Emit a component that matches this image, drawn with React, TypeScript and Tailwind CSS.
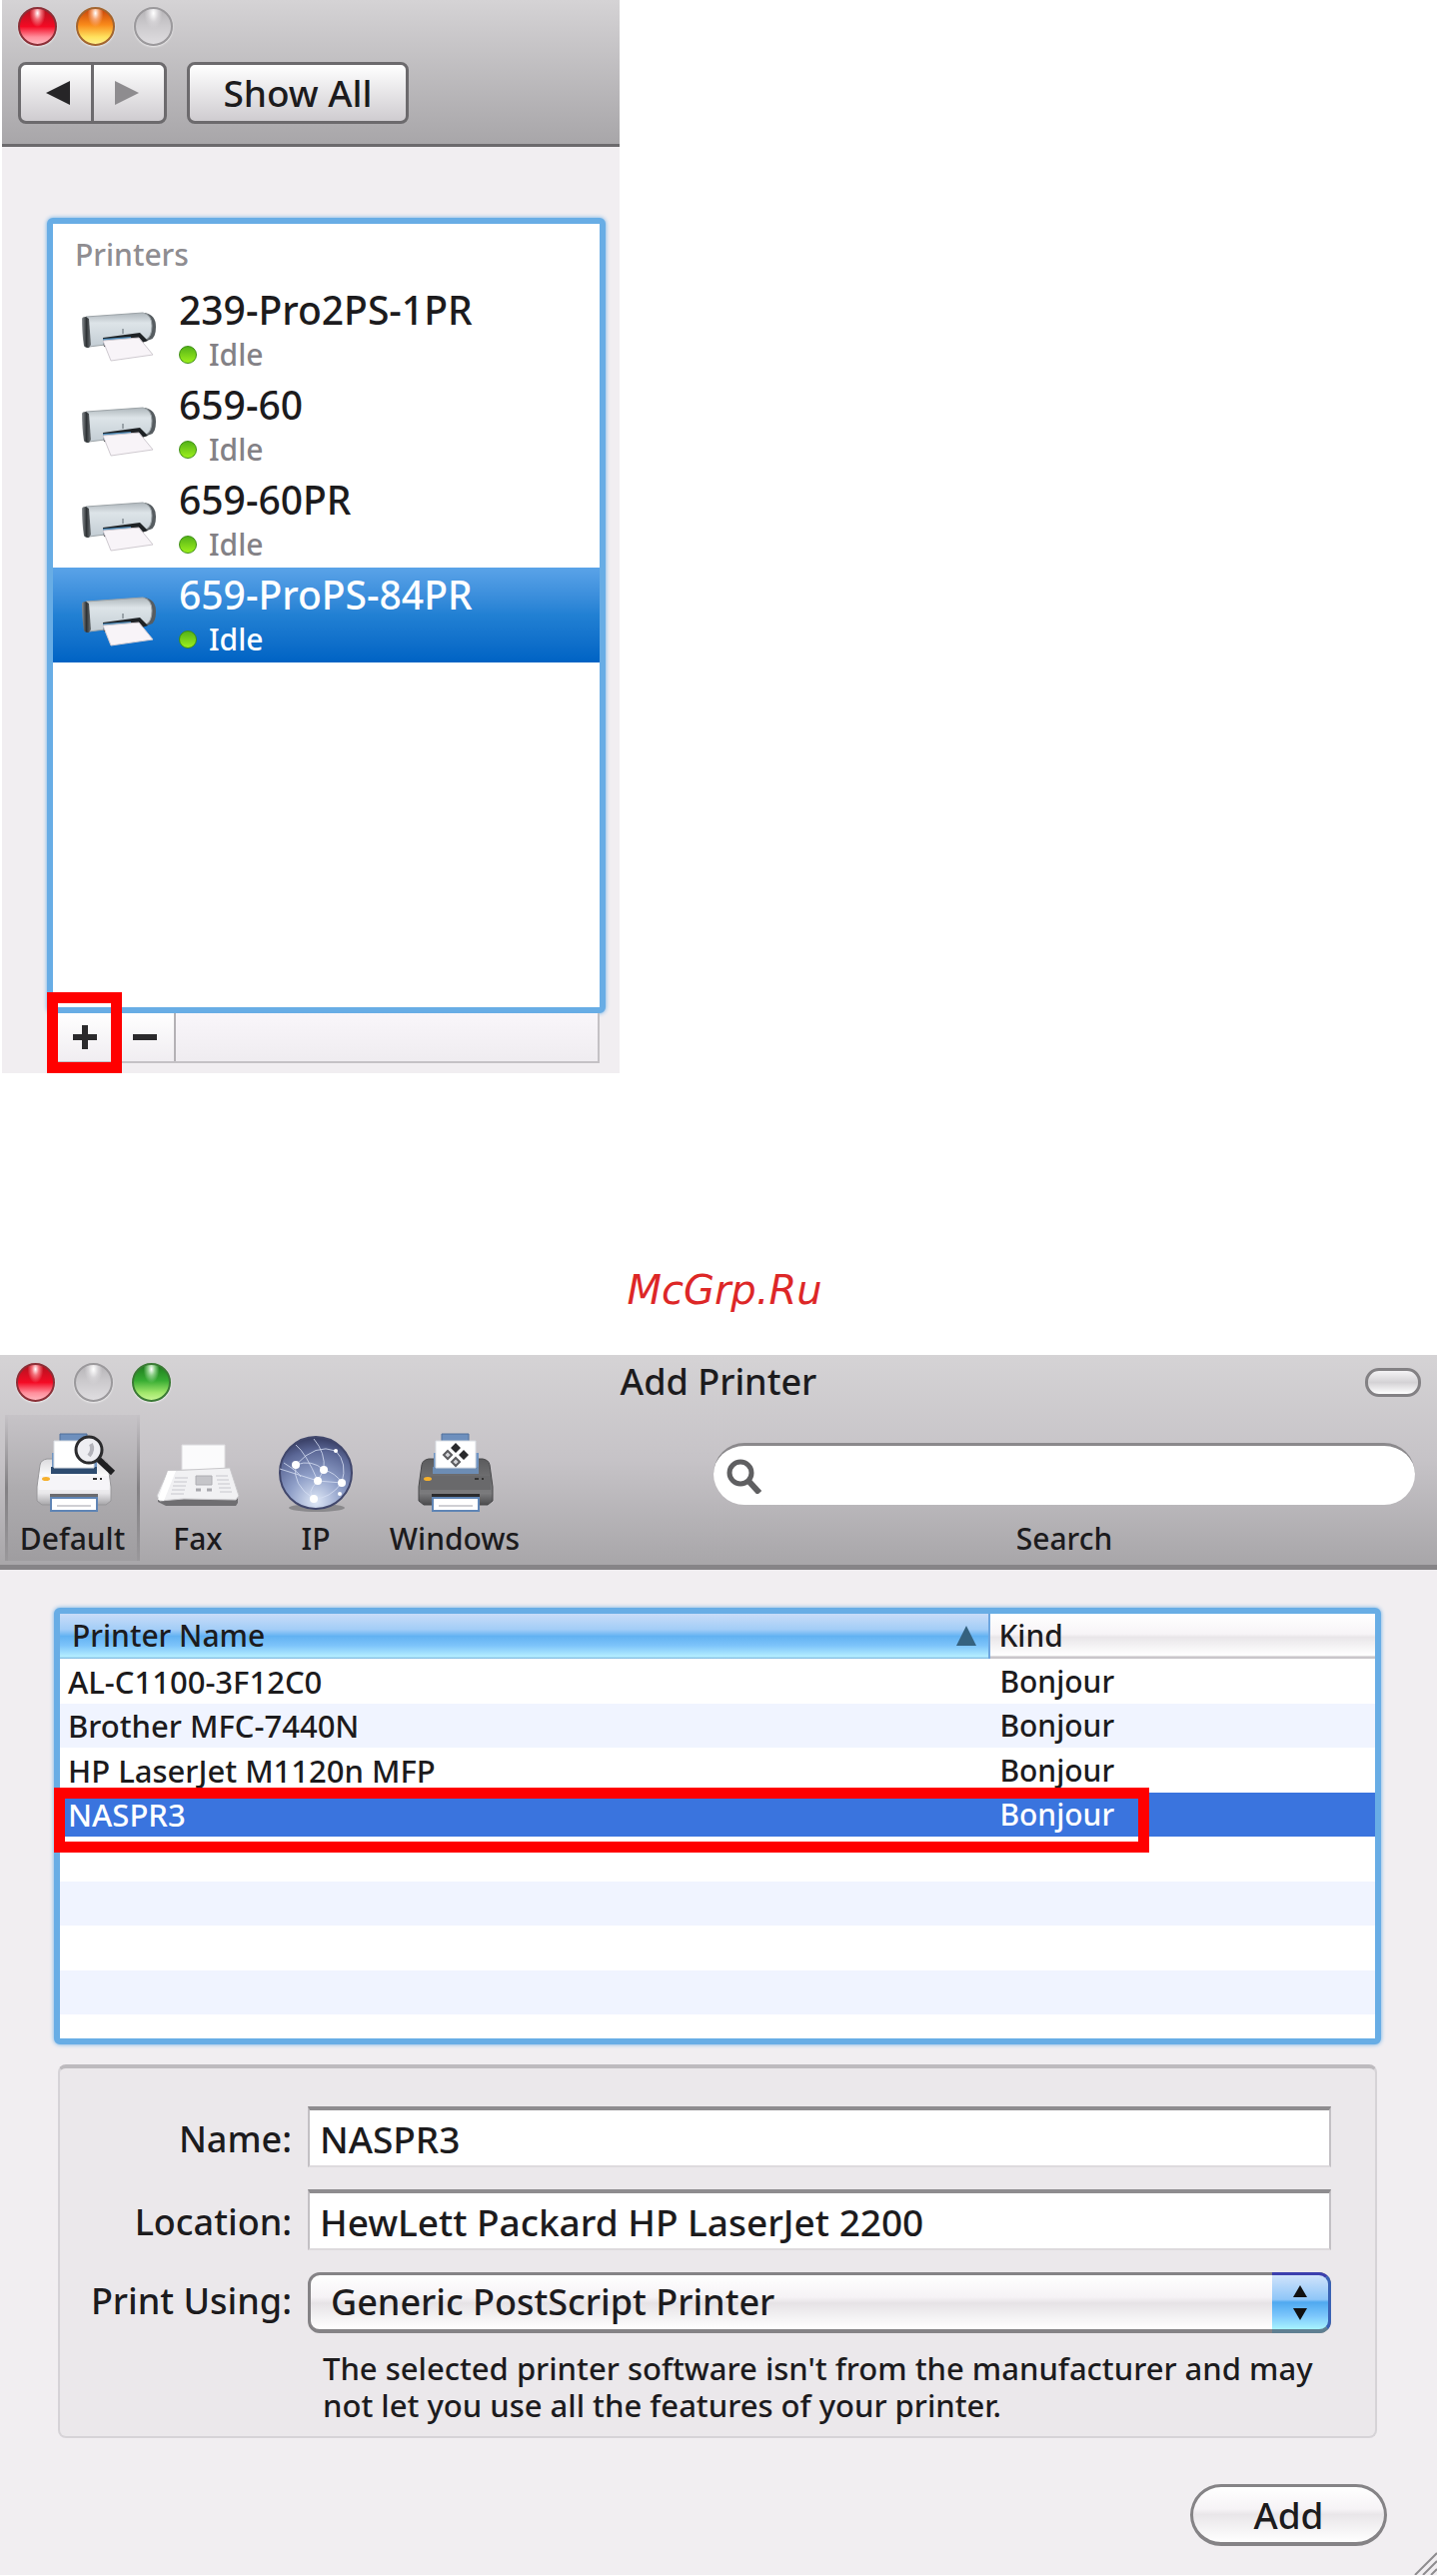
import React from "react";

const queue = [
  { name: "239-Pro2PS-1PR", selected: false },
  { name: "659-60", selected: false },
  { name: "659-60PR", selected: false },
  { name: "659-ProPS-84PR", selected: true },
];

const found = [
  { name: "AL-C1100-3F12C0", kind: "Bonjour" },
  { name: "Brother MFC-7440N", kind: "Bonjour" },
  { name: "HP LaserJet M1120n MFP", kind: "Bonjour" },
  { name: "NASPR3", kind: "Bonjour" },
  { name: "", kind: "" },
  { name: "", kind: "" },
  { name: "", kind: "" },
  { name: "", kind: "" },
];

const lightStyles = {
  red: "border-[#8c2f37] bg-[radial-gradient(ellipse_at_50%_12%,#ffffff_0%,#f4727c_14%,transparent_32%),linear-gradient(#b3121f_0%,#f40a24_50%,#ff8f9c_80%,#ffb5bd_100%)]",
  amber:
    "border-[#a3652f] bg-[radial-gradient(ellipse_at_50%_12%,#ffffff_0%,#f7a878_14%,transparent_32%),linear-gradient(#c8430a_0%,#f98a1a_45%,#ffe25e_80%,#fff08a_100%)]",
  green:
    "border-[#3b7a35] bg-[radial-gradient(ellipse_at_50%_12%,#ffffff_0%,#8fd08a_14%,transparent_32%),linear-gradient(#1c7a1c_0%,#38ad33_45%,#a2e86c_80%,#c6f592_100%)]",
  gray: "border-[#9b999c] bg-[radial-gradient(ellipse_at_50%_12%,#ffffff_0%,#d5d3d6_20%,transparent_36%),linear-gradient(#b6b4b7_0%,#cbc9cc_45%,#dfdde0_100%)]",
};

function Light({ tone, label }: { tone: keyof typeof lightStyles; label: string }) {
  return (
    <button
      type="button"
      aria-label={label}
      className={`size-[39px] rounded-full border-2 shadow-[0_1px_2px_rgba(255,255,255,0.7)] ${lightStyles[tone]}`}
    />
  );
}

function InkjetIcon() {
  return (
    <svg viewBox="0 0 76 50" className="mt-3 h-[50px] w-[76px] shrink-0" aria-hidden="true">
      <defs>
        <linearGradient id="inkjet-body" x1="0" y1="0" x2="0" y2="1">
          <stop offset="0" stopColor="#aeb6bb" />
          <stop offset="0.3" stopColor="#dde4e8" />
          <stop offset="1" stopColor="#c3cdd4" />
        </linearGradient>
        <linearGradient id="inkjet-side" x1="0" y1="0" x2="1" y2="0">
          <stop offset="0" stopColor="#8d9296" />
          <stop offset="0.5" stopColor="#2e3235" />
          <stop offset="1" stopColor="#6b7175" />
        </linearGradient>
      </defs>
      <path d="M64 1q11 2 11 14t-6 13l-6 2z" fill="#565c60" />
      <path d="M5 5L62 1q9 2 9 13t-6 14L8 35z" fill="url(#inkjet-body)" stroke="#9da4a8" strokeWidth="1" />
      <path d="M1 7q0-2 4-2l3 2 2 26-2 3q-4 0-5-2Q1 22 1 7z" fill="url(#inkjet-side)" />
      <path d="M22 26l37-5 8 8-6 2-38 4z" fill="#1e2225" />
      <path d="M22 27l28-2v3l-27 5z" fill="#4d8ab8" />
      <path d="M22 29l36-3 14 17-42 6z" fill="#f8f4f8" stroke="#cfcad0" strokeWidth="1" />
      <path d="M42 17v5" stroke="#9aa3a9" strokeWidth="2" />
    </svg>
  );
}

function PrinterIcon({ dark, children }: { dark?: boolean; children?: React.ReactNode }) {
  const id = dark ? "laser-dark" : "laser-light";
  return (
    <svg viewBox="-2 0 80 80" className="size-20 overflow-visible" aria-hidden="true">
      <defs>
        <linearGradient id={id} x1="0" y1="0" x2="0" y2="1">
          <stop offset="0" stopColor={dark ? "#5b5b5d" : "#dcdbde"} />
          <stop offset="0.4" stopColor={dark ? "#6f6f71" : "#ffffff"} />
          <stop offset="0.75" stopColor={dark ? "#7b7b7d" : "#e8e7ea"} />
          <stop offset="1" stopColor={dark ? "#4c4c4e" : "#a7a6a9"} />
        </linearGradient>
      </defs>
      <path d="M12 26h54q6 1 7 6l3 22v14l-5 4H7l-5-4V54l3-22q1-5 7-6z" fill={`url(#${id})`} stroke={dark ? "#48484a" : "#98979a"} />
      <path d="M25 1h27v10H25z" fill="#6d8fbd" stroke="#50709c" />
      <path d="M17 20h45v21H17z" fill="#7195c2" />
      <path d="M16 34h46v7H16z" fill={dark ? "#6d8db4" : "#2e4c70"} />
      <path d="M19 8h40v27H19z" fill="#ffffff" stroke="#d9dde3" />
      <path d="M4 43h70v14H4z" fill={dark ? "#69696b" : "#f6f5f8"} />
      <path d="M15 61h48v7H15z" fill={dark ? "#2b2b2d" : "#6b6b6e"} />
      <path d="M16 65h46v13H16z" fill="#ffffff" stroke="#5f85b5" strokeWidth="2" />
      <path d="M22 73h34" stroke="#cfcfd4" strokeWidth="2" />
      <ellipse cx="11" cy="46" rx="4" ry="2" fill="#f6b02c" />
      <path d="M58 46h4M65 46h2" stroke="#333" strokeWidth="2" />
      {children}
    </svg>
  );
}

function FaxIcon() {
  return (
    <svg viewBox="0 0 84 80" className="h-20 w-[84px]" aria-hidden="true">
      <path d="M2 64h80v6l-2 3H10l-8-4z" fill="#6f6e71" />
      <path d="M26 12h43v25H26z" fill="#fbfbfc" stroke="#dedde0" />
      <path d="M12 38L74 35l9 28-3 4-52-1-24 2-3-5z" fill="#f1f1f3" stroke="#c9c8cb" />
      <path d="M12 38h8L8 68l-6-1z" fill="#ffffff" />
      <path d="M19 45h13M18 49h13M17 53h13M16 57h13M15 61h13M60 43h12M61 47h12M62 51h12M63 55h12M64 59h12" stroke="#dcdce0" strokeWidth="2" />
      <path d="M40 43h16v9H40z" fill="#c5c5c9" stroke="#aeaeb3" />
      <path d="M40 57h5M51 57h5" stroke="#a8a8ad" strokeWidth="3" />
    </svg>
  );
}

function GlobeIcon() {
  return (
    <svg viewBox="0 0 80 80" className="size-20" aria-hidden="true">
      <defs>
        <radialGradient id="globe" cx="0.5" cy="0.9" r="0.95">
          <stop offset="0" stopColor="#dfe8f7" />
          <stop offset="0.4" stopColor="#8f9fc8" />
          <stop offset="0.75" stopColor="#5b6796" />
          <stop offset="1" stopColor="#2b2f52" />
        </radialGradient>
      </defs>
      <ellipse cx="41" cy="75" rx="28" ry="4" fill="#8a898c" />
      <circle cx="40" cy="40" r="36" fill="url(#globe)" stroke="#41476c" strokeWidth="2" />
      <g fill="none" stroke="#d6def2" strokeWidth="1" opacity="0.8">
        <path d="M20 32Q40 10 60 18M20 32Q36 26 48 37L42 48L66 50M48 37Q60 40 66 50M4 36L42 48Q30 60 38 66M48 37Q50 20 38 6M66 50Q72 30 60 18M20 32Q16 52 38 66M38 66Q54 66 66 50M42 48Q30 20 20 12M8 30Q24 40 25 44" />
      </g>
      <g fill="#ffffff">
        <circle cx="20" cy="32" r="4" />
        <circle cx="48" cy="37" r="4" />
        <circle cx="42" cy="48" r="4" />
        <circle cx="66" cy="50" r="4" />
        <circle cx="38" cy="66" r="4" />
        <circle cx="60" cy="18" r="2" />
        <circle cx="64" cy="61" r="2" />
      </g>
    </svg>
  );
}

function Magnifier({ className }: { className: string }) {
  return (
    <svg viewBox="0 0 36 36" className={className} aria-hidden="true">
      <circle cx="15" cy="15" r="11" fill="none" stroke="#5f5f61" strokeWidth="5" />
      <path d="M23 23l11 12" stroke="#5f5f61" strokeWidth="6" />
    </svg>
  );
}

function ToolbarItem({ label, className, children }: { label: string; className: string; children: React.ReactNode }) {
  return (
    <button type="button" className={`flex flex-col items-center pt-[18px] ${className}`}>
      {children}
      <span className="mt-1 text-[30px] leading-[44px] font-medium">{label}</span>
    </button>
  );
}

function PrintersWindow() {
  return (
    <section className="ml-0.5 w-[43%] bg-[#f1eef1]" aria-label="Printers">
      <header className="border-b-[3px] border-[#6c6a6d] bg-linear-to-b from-[#d5d3d5] to-[#a8a6a9] px-4 pt-[7px] pb-5">
        <div className="flex gap-[19px]">
          <Light tone="red" label="Close" />
          <Light tone="amber" label="Minimize" />
          <Light tone="gray" label="Zoom" />
        </div>
        <div className="mt-4 flex gap-5">
          <div className="flex h-[62px] w-[149px] overflow-hidden rounded-lg border-[3px] border-[#6c6a6d] bg-linear-to-b from-white to-[#cfccd0]">
            <button type="button" aria-label="Back" className="flex flex-1 items-center justify-center border-r-[3px] border-[#6c6a6d] pl-1">
              <svg viewBox="0 0 24 24" className="size-6" aria-hidden="true"><path d="M24 0v24L0 12z" fill="#262527" /></svg>
            </button>
            <button type="button" aria-label="Forward" className="flex flex-1 items-center justify-center pr-1">
              <svg viewBox="0 0 24 24" className="size-6" aria-hidden="true"><path d="M0 0v24L24 12z" fill="#8e8c8f" /></svg>
            </button>
          </div>
          <button type="button" className="h-[62px] w-[222px] rounded-lg border-[3px] border-[#6c6a6d] bg-linear-to-b from-white to-[#cfccd0] text-[37px] leading-[56px] font-medium">
            Show All
          </button>
        </div>
      </header>

      <div className="pt-[71px] pr-[14px] pb-[10px] pl-[45px]">
        <div className="relative">
          <div className="min-h-[796px] rounded-md border-[6px] border-[#68ade5] bg-white shadow-[0_0_4px_#68ade5]">
            <h2 className="pt-[3px] pl-[22px] text-[30px] leading-[56px] font-medium text-[#8f8d91]">Printers</h2>
            <ul>
              {queue.map((p) => (
                <li
                  key={p.name}
                  className={`flex h-[95px] items-center gap-[22px] pl-7 ${
                    p.selected ? "bg-linear-to-b from-[#5aa3e8] via-[#2180d3] to-[#0063c4] text-white" : "text-[#1c1b1d]"
                  }`}
                >
                  <InkjetIcon />
                  <div className="pt-[3px]">
                    <div className="text-[39px] leading-[46px] font-medium">{p.name}</div>
                    <div className={`flex items-center gap-3 text-[30px] leading-[44px] font-medium ${p.selected ? "text-white" : "text-[#838186]"}`}>
                      <span className="size-[18px] rounded-full border border-[#3d8f12] bg-linear-to-b from-[#54b318] to-[#9cf01c]" />
                      Idle
                    </div>
                  </div>
                </li>
              ))}
            </ul>
          </div>
          <div className="mr-1.5 ml-[3px] flex h-[50px] border-r-2 border-b-2 border-[#c4c1c5] bg-linear-to-b from-[#f9f6fa] to-[#efecf0]">
            <button type="button" aria-label="Add printer" className="flex w-[70px] items-center justify-center bg-linear-to-b from-white to-[#f0edf1]">
              <svg viewBox="0 0 24 24" className="size-6" aria-hidden="true"><path d="M9 0h6v9h9v6h-9v9H9v-9H0V9h9z" fill="#2b2a2c" /></svg>
            </button>
            <button type="button" aria-label="Remove printer" className="flex w-14 items-center justify-center border-r-2 border-[#b4b1b5] bg-linear-to-b from-white to-[#f0edf1] pr-1">
              <svg viewBox="0 0 24 24" className="size-6" aria-hidden="true"><path d="M0 9h24v6H0z" fill="#2b2a2c" /></svg>
            </button>
          </div>
          <div className="pointer-events-none absolute -bottom-[10px] left-0 h-[81px] w-[75px] border-[11px] border-[#ff0000]" />
        </div>
      </div>
    </section>
  );
}

function AddPrinterWindow() {
  return (
    <section className="relative bg-[#f1eef1] pb-[29px]" aria-label="Add Printer">
      <header className="border-b-[5px] border-[#868487] bg-linear-to-b from-[#d5d3d5] via-[#c6c3c7] to-[#a8a6a9] pb-1">
        <div className="grid h-[54px] grid-cols-3 items-center px-4">
          <div className="flex gap-[19px]">
            <Light tone="red" label="Close" />
            <Light tone="gray" label="Minimize" />
            <Light tone="green" label="Zoom" />
          </div>
          <h1 className="text-center text-[36px] leading-[54px] font-medium">Add Printer</h1>
          <button
            type="button"
            aria-label="Toggle toolbar"
            className="h-[29px] w-14 justify-self-end rounded-[14px] border-[3px] border-[#838184] bg-linear-to-b from-[#f4f3f5] via-[#d4d2d5] to-white"
          />
        </div>
        <div className="mt-1.5 flex">
          <ToolbarItem
            label="Default"
            className="ml-[5px] w-[135px] border-x-[3px] bg-linear-to-b from-[#c6c3c7] via-[#aeacaf] to-[#9f9da0] [border-image:linear-gradient(#c6c3c7,#838184_50%,#9a989b)_1]"
          >
            <PrinterIcon>
              <path d="M62 25l16 15" stroke="#1f1f21" strokeWidth="6" />
              <circle cx="54" cy="17" r="13" fill="#eeeef2" stroke="#2b2b2d" strokeWidth="3" />
              <path d="M56 11q3 6-2 12" fill="none" stroke="#b3b3ba" strokeWidth="4" />
            </PrinterIcon>
          </ToolbarItem>
          <ToolbarItem label="Fax" className="w-[116px]">
            <FaxIcon />
          </ToolbarItem>
          <ToolbarItem label="IP" className="w-[120px]">
            <GlobeIcon />
          </ToolbarItem>
          <ToolbarItem label="Windows" className="w-[158px]">
            <PrinterIcon dark>
              <path d="M39 10l5 5-5 5-5-5zM47 17l5 5-5 5-5-5z" fill="#2a2a2c" />
              <path d="M31 18l4 4-4 4-4-4zM39 25l4 4-4 4-4-4z" fill="#d4d4d8" stroke="#5b5b5e" strokeWidth="2" />
            </PrinterIcon>
          </ToolbarItem>
          <div className="mr-[22px] ml-[180px] flex flex-1 flex-col items-center pt-[28px]">
            <div className="relative w-full">
              <Magnifier className="absolute top-[15px] left-3 size-9" />
              <input
                id="search"
                type="search"
                className="block h-[62px] w-full rounded-full border-t-[3px] border-[#8b898c] bg-white pr-6 pl-14 text-[30px] outline-none"
              />
            </div>
            <label htmlFor="search" className="mt-3 text-[30px] leading-[44px] font-medium">
              Search
            </label>
          </div>
        </div>
      </header>

      <div className="pt-[38px] pr-14 pl-[54px]">
        <div className="relative">
          <div className="rounded-md border-[6px] border-[#68ade5] bg-white pb-6 shadow-[0_0_4px_#68ade5]">
            <table className="w-full table-fixed border-collapse text-left text-[31px] leading-[42px] font-medium">
              <thead>
                <tr className="h-[45px]">
                  <th scope="col" className="w-[70.7%] border-r-2 border-[#6fa6df] bg-[linear-gradient(#c9dcf8_0%,#a3cdf7_35%,#62b2f2_50%,#7cc3fa_70%,#b4edff_95%,#7db5dd_100%)] p-0 pr-3 pb-0.5 pl-3 font-medium">
                    <div className="flex items-center justify-between text-[30px] leading-10">
                      Printer Name
                      <svg viewBox="0 0 20 20" className="size-5" aria-hidden="true"><path d="M10 0l10 20H0z" fill="#35627f" /></svg>
                    </div>
                  </th>
                  <th scope="col" className="bg-[linear-gradient(#ffffff_0%,#f7f4f7_45%,#e9e6e9_52%,#ffffff_92%,#c9c6ca_96%)] p-0 pb-0.5 pl-2 text-[30px] leading-10 font-medium">Kind</th>
                </tr>
              </thead>
              <tbody>
                {found.map((p, i) => (
                  <tr
                    key={i}
                    className={
                      p.name === "NASPR3" ? "h-11 bg-[#3a74de] text-white" : i % 2 === 1 ? "h-11 bg-[#f0f4ff]" : "h-[45px]"
                    }
                  >
                    <td className="p-0 pl-2">{p.name}</td>
                    <td className="p-0 pl-2.5 text-[30px]">{p.kind}</td>
                  </tr>
                ))}
              </tbody>
            </table>
          </div>
          <div className="pointer-events-none absolute top-[180px] left-0 h-[65px] w-[82.5%] border-[11px] border-[#ff0000]" />
        </div>

        <form className="mx-1 mt-5 grid grid-cols-[232px_1fr] gap-x-4 rounded-lg border-2 border-t-4 border-[#d6d3d7] border-t-[#bdbabe] bg-[#ebe8eb] pt-[38px] pr-11 pb-3 text-[36px] font-medium">
          <label htmlFor="name" className="pt-[5px] text-right leading-[55px]">Name:</label>
          <input
            id="name"
            defaultValue="NASPR3"
            className="h-[61px] w-full min-w-0 border-2 border-t-4 border-b-[#dddadd] border-[#c3c0c4] border-t-[#8e8c8f] bg-white pt-0.5 pl-2.5 text-[37px] outline-none"
          />
          <label htmlFor="location" className="mt-[22px] pt-[5px] text-right leading-[55px]">Location:</label>
          <input
            id="location"
            defaultValue="HewLett Packard HP LaserJet 2200"
            className="mt-[22px] h-[61px] w-full min-w-0 border-2 border-t-4 border-b-[#dddadd] border-[#c3c0c4] border-t-[#8e8c8f] bg-white pt-0.5 pl-2.5 text-[37px] outline-none"
          />
          <label htmlFor="driver" className="mt-[22px] text-right leading-[58px]">Print Using:</label>
          <div className="relative mt-[22px]">
            <select
              id="driver"
              className="block h-[61px] w-full appearance-none rounded-xl border-[3px] border-b-4 border-[#858386] bg-[linear-gradient(#ffffff_0%,#f6f3f6_40%,#e6e3e6_52%,#ffffff_100%)] pb-0.5 pl-5 text-[36px] font-medium outline-none"
            >
              <option>Generic PostScript Printer</option>
            </select>
            <span className="pointer-events-none absolute top-0 right-0 flex h-[61px] w-[59px] flex-col items-center justify-center gap-[11px] rounded-r-xl border-t-[3px] border-r-[3px] border-b-4 border-[#3c3fae] border-r-[#3a62b4] border-b-[#5f7f92] bg-[linear-gradient(#cfe3fb_0%,#8fc6f8_45%,#4fa9f0_50%,#7cc6fb_75%,#a8f4ff_100%)]">
              <svg viewBox="0 0 14 12" className="h-3 w-3.5" aria-hidden="true"><path d="M7 0l7 12H0z" fill="#111" /></svg>
              <svg viewBox="0 0 14 12" className="h-3 w-3.5" aria-hidden="true"><path d="M7 12L0 0h14z" fill="#111" /></svg>
            </span>
          </div>
          <p className="col-start-2 mt-[17px] pl-[15px] text-[31px] leading-[37px] whitespace-nowrap">
            The selected printer software isn't from the manufacturer and may
            <br />
            not let you use all the features of your printer.
          </p>
        </form>
      </div>

      <div className="mt-[46px] flex justify-end pr-[50px]">
        <button
          type="button"
          className="h-[62px] w-[197px] rounded-full border-[3px] border-b-4 border-[#858386] bg-[linear-gradient(#ffffff_0%,#f6f3f6_40%,#e9e6e9_50%,#ffffff_100%)] text-[37px] leading-[52px] font-medium"
        >
          Add
        </button>
      </div>
      <svg viewBox="0 0 24 24" className="absolute right-0 bottom-0 size-6" aria-hidden="true">
        <path d="M2 24L24 2M10 24l14-14M18 24l6-6" stroke="#8e8c8f" strokeWidth="2" />
      </svg>
    </section>
  );
}

export default function App() {
  return (
    <main className="bg-white font-['Noto_Sans','Open_Sans',sans-serif] text-[#1c1b1d]">
      <PrintersWindow />
      <p className="pt-[193px] pb-[41px] pl-3 text-center font-['DejaVu_Sans',sans-serif] text-[40px] leading-[48px] text-[#dd2727] italic">
        McGrp.Ru
      </p>
      <AddPrinterWindow />
    </main>
  );
}
